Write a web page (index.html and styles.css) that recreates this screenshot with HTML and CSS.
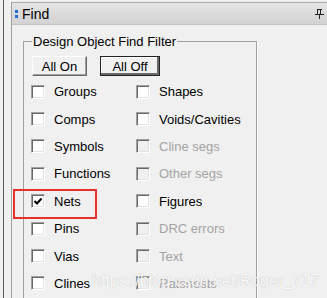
FILE: index.html
```html
<!DOCTYPE html>
<html lang="en">
<head>
    <meta charset="utf-8" />
    <title>Find</title>
    <link rel="stylesheet" href="styles.css">
</head>
<body>
    <div class="frame">
        <div class="gutter"></div>
        <div class="panel">
            <div class="titlebar">
                <span class="grip"><i></i><i></i></span>
                <span class="title">Find</span>
                <svg class="pin" width="9" height="10" viewBox="0 0 9 10">
                    <path d="M2 0.5h5M2.5 1v4M5.5 1v4M0 5.5h9M4.5 6v4" stroke="#222" stroke-width="1" fill="none"/>
                </svg>
            </div>
            <div class="content">
                <fieldset class="group">
                    <legend>Design Object Find Filter</legend>
                    <div class="buttons">
                        <button class="btn on">All On</button>
                        <button class="btn off">All Off</button>
                    </div>
                    <div class="grid">
                        <label class="item"><span class="box"></span>Groups</label>
                        <label class="item"><span class="box"></span>Shapes</label>
                        <label class="item"><span class="box"></span>Comps</label>
                        <label class="item"><span class="box"></span>Voids/Cavities</label>
                        <label class="item"><span class="box"></span>Symbols</label>
                        <label class="item disabled"><span class="box"></span>Cline segs</label>
                        <label class="item"><span class="box"></span>Functions</label>
                        <label class="item disabled"><span class="box"></span>Other segs</label>
                        <label class="item"><span class="box"><svg width="12" height="12" viewBox="0 0 12 12"><path d="M2.5 6l2.5 2.5 4.5-5" stroke="#000" stroke-width="2" fill="none"/></svg></span>Nets</label>
                        <label class="item"><span class="box"></span>Figures</label>
                        <label class="item"><span class="box"></span>Pins</label>
                        <label class="item disabled"><span class="box"></span>DRC errors</label>
                        <label class="item"><span class="box"></span>Vias</label>
                        <label class="item disabled"><span class="box"></span>Text</label>
                        <label class="item"><span class="box"></span>Clines</label>
                        <label class="item disabled"><span class="box"></span>Ratsnests</label>
                    </div>
                </fieldset>
            </div>
        </div>
    </div>
    <div class="highlight"></div>
    <div class="watermark">https://blog.csdn.net/Roger_717</div>
</body>
</html>
```

FILE: styles.css
```css
body {
    margin: 0;
    width: 327px;
    height: 298px;
    overflow: hidden;
    background: #f0f0f0;
    font-family: "Liberation Sans", Arial, sans-serif;
    font-size: 13px;
    color: #000;
}
.frame {
    display: flex;
    height: 298px;
    overflow: hidden;
}
.gutter {
    width: 7px;
    margin-left: 3px;
    border-left: 1px solid #5a5a5a;
}
.panel {
    flex: 1;
    margin-top: 2px;
    border-left: 1px solid #a0a0a0;
    border-top: 1px solid #a8a8a8;
    overflow: hidden;
}
.titlebar {
    height: 21px;
    display: flex;
    align-items: center;
    padding-left: 3px;
    background: linear-gradient(#e4e4e4, #d2d2d2);
    border-bottom: 1px solid #c4c4c4;
}
.grip {
    display: flex;
    flex-direction: column;
    gap: 2px;
    margin-right: 4px;
}
.grip i {
    width: 3px;
    height: 3px;
    background: #1a6fd8;
}
.title {
    font-size: 14px;
}
.pin {
    margin-left: auto;
    margin-right: 3px;
}
.content {
    padding-left: 11px;
}
.group {
    box-sizing: border-box;
    width: 234px;
    margin: 9px 0 0 0;
    padding: 7px 0 20px 8px;
    border: 1px solid #a0a0a0;
    box-shadow: 1px 1px 0 #fff;
}
.group legend {
    padding: 0 1px;
    line-height: 15px;
}
.buttons {
    display: flex;
    gap: 13px;
}
.btn {
    font: inherit;
    height: 20px;
    padding: 0;
    background: #f0f0f0;
    color: #000;
    border: 1px solid;
    border-color: #fff #696969 #696969 #fff;
    box-shadow: inset -1px -1px #a0a0a0;
}
.btn.on {
    width: 55px;
}
.btn.off {
    width: 60px;
    outline: 1px solid #222;
    outline-offset: -1px;
    box-shadow: inset -2px -2px #696969, inset 1px 1px #fff;
}
.grid {
    display: grid;
    grid-template-columns: 105px 105px;
    grid-auto-rows: 27.4px;
    margin: 2px 0 0 -1px;
}
.item {
    display: flex;
    align-items: center;
    gap: 9px;
    white-space: nowrap;
}
.box {
    box-sizing: border-box;
    width: 14px;
    height: 14px;
    display: flex;
    align-items: center;
    justify-content: center;
    background: #fff;
    border: 1px solid;
    border-color: #a0a0a0 #fff #fff #a0a0a0;
    box-shadow: inset 1px 1px #696969, inset -1px -1px #e3e3e3;
}
.disabled {
    color: #a3a3a3;
}
.disabled .box {
    background: #f0f0f0;
}
.highlight {
    position: absolute;
    left: 13px;
    top: 189px;
    width: 80px;
    height: 26px;
    border: 2px solid #e8302c;
}
.watermark {
    position: absolute;
    left: 92px;
    top: 272px;
    font-size: 16px;
    color: rgba(255, 255, 255, 0.95);
    text-shadow: 0 0 1px rgba(90, 90, 90, 0.45);
}
```
